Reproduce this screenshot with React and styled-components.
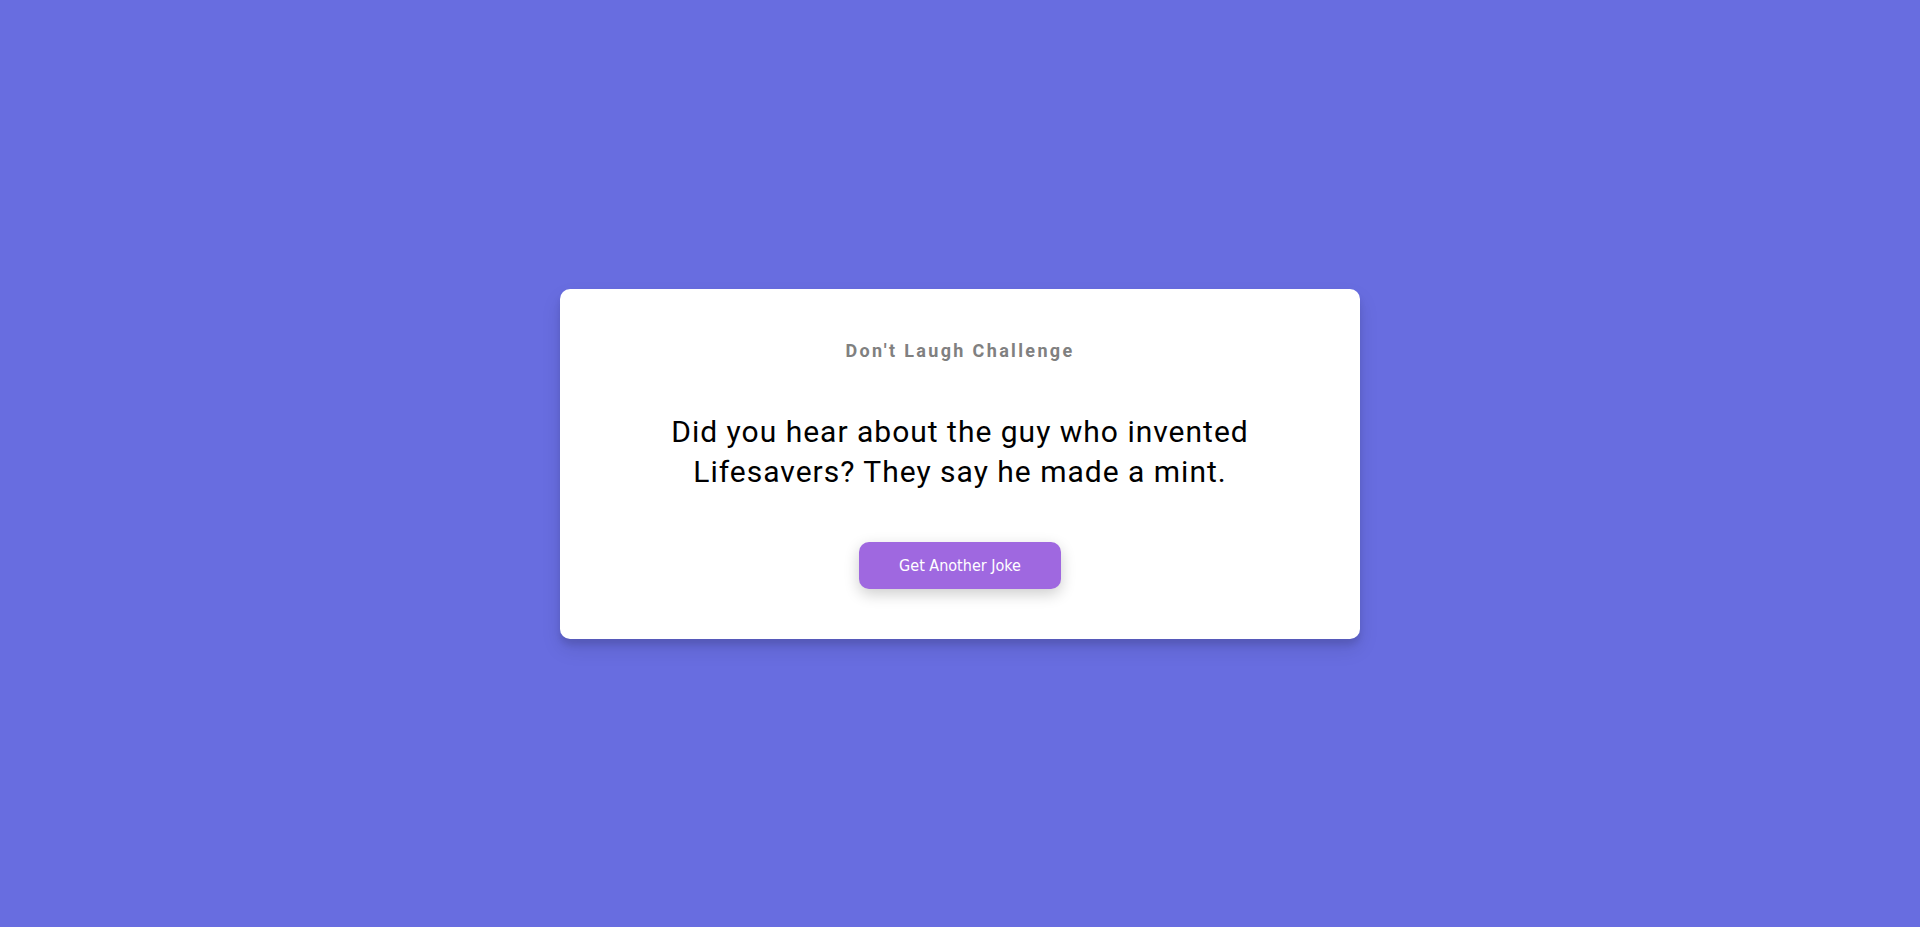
import React from "react";
import styled, { createGlobalStyle } from "styled-components";

const GlobalStyle = createGlobalStyle`
  * {
    box-sizing: border-box;
  }

  body {
    margin: 0;
    background: #686de0;
    font-family: Roboto, "Liberation Sans", sans-serif;
  }
`;

const Page = styled.div`
  display: flex;
  align-items: center;
  justify-content: center;
  min-height: 927px;
  padding: 20px;
`;

const Card = styled.div`
  width: 800px;
  max-width: 100%;
  padding: 50px 20px;
  background: #fff;
  border-radius: 10px;
  box-shadow: 0 10px 20px rgba(0, 0, 0, 0.1), 0 6px 6px rgba(0, 0, 0, 0.1);
  text-align: center;
  display: flex;
  flex-direction: column;
  align-items: center;
  gap: 50px;
`;

const Title = styled.h3`
  margin: 0;
  font-size: 18px;
  font-weight: 700;
  letter-spacing: 2.35px;
  line-height: 23px;
  color: #808080;
`;

const Joke = styled.div`
  max-width: 680px;
  font-size: 30px;
  line-height: 40px;
  letter-spacing: 1px;
  color: #000;
`;

const Button = styled.button`
  border: 0;
  border-radius: 10px;
  background: #9f68e0;
  color: #fff;
  font-family: Tahoma, "DejaVu Sans Condensed", "Liberation Sans", sans-serif;
  font-size: 16px;
  line-height: 19px;
  padding: 14px 40px;
  cursor: pointer;
  box-shadow: 0 5px 15px rgba(0, 0, 0, 0.2);
`;

export default function App() {
  return (
    <>
      <GlobalStyle />
      <Page>
        <Card>
          <Title>Don't Laugh Challenge</Title>
          <Joke>
            Did you hear about the guy who invented Lifesavers? They say he made
            a mint.
          </Joke>
          <Button>Get Another Joke</Button>
        </Card>
      </Page>
    </>
  );
}
